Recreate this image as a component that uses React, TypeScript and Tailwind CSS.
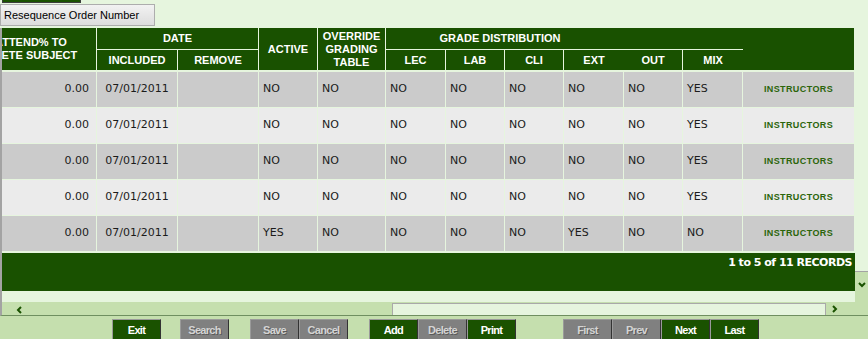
import React from "react";

const rows = [
  { active: "NO", ext: "NO", mix: "YES" },
  { active: "NO", ext: "NO", mix: "YES" },
  { active: "NO", ext: "NO", mix: "YES" },
  { active: "NO", ext: "NO", mix: "YES" },
  { active: "YES", ext: "YES", mix: "NO" },
];

const buttons = [
  { label: "Exit", on: true, ml: "ml-0" },
  { label: "Search", on: false, ml: "ml-[19px]" },
  { label: "Save", on: false, ml: "ml-[21px]" },
  { label: "Cancel", on: false, ml: "ml-0" },
  { label: "Add", on: true, ml: "ml-[21px]" },
  { label: "Delete", on: false, ml: "ml-0" },
  { label: "Print", on: true, ml: "ml-0" },
  { label: "First", on: false, ml: "ml-[47px]" },
  { label: "Prev", on: false, ml: "ml-0" },
  { label: "Next", on: true, ml: "ml-0" },
  { label: "Last", on: true, ml: "ml-0" },
];

const hd = "flex items-center justify-center text-center border-[#e6f5de] text-white font-bold text-[11px] leading-[13px]";
const td = "flex items-center border-r border-b border-[#e6f5de] text-[11px] text-[#1b1b1b] font-['DejaVu_Sans',sans-serif]";

function Chevron({ dir }: { dir: "left" | "right" | "down" }) {
  const d =
    dir === "left" ? "M5 1 L2 4 L5 7" : dir === "right" ? "M2 1 L5 4 L2 7" : "M1 2 L4 5 L7 2";
  return (
    <svg width="8" height="8" viewBox="0 0 8 8">
      <path d={d} fill="none" stroke="#1a5200" strokeWidth="2" />
    </svg>
  );
}

export default function App() {
  return (
    <div className="w-[868px] h-[339px] overflow-hidden bg-[#e6f5de] font-['Liberation_Sans',Arial,sans-serif]">
      {/* bottom of the button above */}
      <div className="ml-[2px] h-[3px] w-[79px] bg-[#1a5200] border border-t-0 border-[#3c3c3c]" />

      <button className="mt-[1px] block h-[22px] w-[155px] border border-[#adadad] bg-gradient-to-b from-[#f2f2f2] to-[#dddddd] pl-[3px] text-left text-[11px] text-black">
        Resequence Order Number
      </button>

      {/* grid panel */}
      <div className="mt-[2px] flex border-l-2 border-[#a3a3a3]">
        <div className="w-[853px]">
          <div className="h-[225px] w-[853px] overflow-hidden">
            <div className="ml-[-59px] grid w-[911px] grid-cols-[154px_81px_81px_59px_68px_60px_59px_59px_60px_59px_60px_111px] grid-rows-[22px_22px_36px_36px_36px_36px_36px] bg-[#195100]">
              {/* header row 1 */}
              <div className={`${hd} row-span-2 border-r border-b-2`}>
                MIN ATTEND% TO
                <br />
                COMPLETE SUBJECT
              </div>
              <div className={`${hd} col-span-2 border-r border-b`}>DATE</div>
              <div className={`${hd} row-span-2 border-r border-b-2`}>ACTIVE</div>
              <div className={`${hd} row-span-2 border-r border-b-2`}>
                OVERRIDE
                <br />
                GRADING
                <br />
                TABLE
              </div>
              <div className={`${hd} col-span-6 border-b pr-[129px]`}>GRADE DISTRIBUTION</div>
              <div className={`${hd} row-span-2 border-b-2`} />
              {/* header row 2 */}
              <div className={`${hd} border-r border-b-2`}>INCLUDED</div>
              <div className={`${hd} border-r border-b-2`}>REMOVE</div>
              <div className={`${hd} border-r border-b-2`}>LEC</div>
              <div className={`${hd} border-r border-b-2`}>LAB</div>
              <div className={`${hd} border-r border-b-2`}>CLI</div>
              <div className={`${hd} border-b-2`}>EXT</div>
              <div className={`${hd} border-r border-b-2`}>OUT</div>
              <div className={`${hd} border-b-2`}>MIX</div>

              {rows.map((r, i) => {
                const bg = i % 2 === 0 ? "bg-[#cbcbcb]" : "bg-[#ebebeb]";
                return (
                  <React.Fragment key={i}>
                    <div className={`${td} ${bg} justify-end pr-[7px]`}>0.00</div>
                    <div className={`${td} ${bg} justify-center`}>07/01/2011</div>
                    <div className={`${td} ${bg}`} />
                    <div className={`${td} ${bg} pl-[4px]`}>{r.active}</div>
                    <div className={`${td} ${bg} pl-[4px]`}>NO</div>
                    <div className={`${td} ${bg} pl-[4px]`}>NO</div>
                    <div className={`${td} ${bg} pl-[4px]`}>NO</div>
                    <div className={`${td} ${bg} pl-[4px]`}>NO</div>
                    <div className={`${td} ${bg} pl-[4px]`}>{r.ext}</div>
                    <div className={`${td} ${bg} pl-[4px]`}>NO</div>
                    <div className={`${td} ${bg} pl-[4px]`}>{r.mix}</div>
                    <div className={`flex items-center justify-center border-b border-[#e6f5de] ${bg} font-['Liberation_Sans',Arial,sans-serif] text-[9px] font-bold tracking-[0.4px] text-[#2b650a]`}>
                      INSTRUCTORS
                    </div>
                  </React.Fragment>
                );
              })}
            </div>
          </div>

          <div className="h-[38px] bg-[#195100] pr-[3px] pt-[2px] text-right font-['DejaVu_Sans',sans-serif] text-[11px] font-bold tracking-[-0.5px] text-white">
            1 to 5 of 11 RECORDS
          </div>
          <div className="h-[11px]" />
        </div>

        <div className="flex w-[13px] flex-col">
          <div className="h-[243px]" />
          <div className="flex h-[31px] justify-center border-t border-[#a3a3a3] bg-[#c5dfae] pt-[9px]">
            <Chevron dir="down" />
          </div>
        </div>
      </div>

      {/* horizontal scrollbar */}
      <div className="flex h-[14px] items-start border-l-2 border-b border-l-[#a3a3a3] border-b-[#6f8f60] bg-[#c5dfae]">
        <div className="ml-[14px] mt-[4px]">
          <Chevron dir="left" />
        </div>
        <div className="ml-[368px] mt-[1px] h-[12px] w-[434px] border border-b-0 border-[#a9a9a9] bg-[#e6f5de]" />
        <div className="ml-[5px] mt-[3px]">
          <Chevron dir="right" />
        </div>
      </div>

      {/* button bar */}
      <div className="flex h-[23px] bg-[#c5dfae] pl-[112px] pt-[3px]">
        {buttons.map((b) => (
          <button
            key={b.label}
            className={`${b.ml} h-[22px] w-[49px] border border-t-[#9a9a9a] border-l-[#9a9a9a] border-r-[#333333] border-b-[#333333] text-[11px] font-bold leading-[16px] tracking-[-0.7px] ${
              b.on
                ? "bg-[#1a5200] text-white"
                : "bg-[#808080] text-[#d4d4d4] [text-shadow:1px_1px_0_#5a5a5a]"
            }`}
          >
            {b.label}
          </button>
        ))}
      </div>
    </div>
  );
}
